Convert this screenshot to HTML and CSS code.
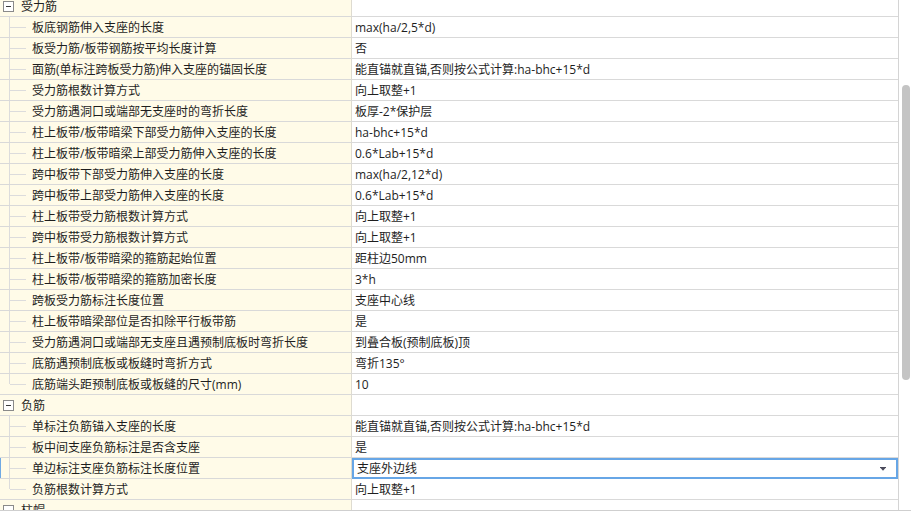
FILE: index.html
```html
<!DOCTYPE html>
<html>
<head>
<meta charset="utf-8">
<link rel="stylesheet" href="styles.css">
</head>
<body>
<div class="panel">
  <div class="grid">
    <div class="rows">
      <div class="row group"><div class="name"><span class="toggle"></span><span class="label">受力筋</span></div><div class="value"></div></div>
      <div class="row"><div class="name"><span class="branch"></span><span class="label">板底钢筋伸入支座的长度</span></div><div class="value"><span class="label">max(ha/2,5*d)</span></div></div>
      <div class="row"><div class="name"><span class="branch"></span><span class="label">板受力筋/板带钢筋按平均长度计算</span></div><div class="value"><span class="label">否</span></div></div>
      <div class="row"><div class="name"><span class="branch"></span><span class="label">面筋(单标注跨板受力筋)伸入支座的锚固长度</span></div><div class="value"><span class="label">能直锚就直锚,否则按公式计算:ha-bhc+15*d</span></div></div>
      <div class="row"><div class="name"><span class="branch"></span><span class="label">受力筋根数计算方式</span></div><div class="value"><span class="label">向上取整+1</span></div></div>
      <div class="row"><div class="name"><span class="branch"></span><span class="label">受力筋遇洞口或端部无支座时的弯折长度</span></div><div class="value"><span class="label">板厚-2*保护层</span></div></div>
      <div class="row"><div class="name"><span class="branch"></span><span class="label">柱上板带/板带暗梁下部受力筋伸入支座的长度</span></div><div class="value"><span class="label">ha-bhc+15*d</span></div></div>
      <div class="row"><div class="name"><span class="branch"></span><span class="label">柱上板带/板带暗梁上部受力筋伸入支座的长度</span></div><div class="value"><span class="label">0.6*Lab+15*d</span></div></div>
      <div class="row"><div class="name"><span class="branch"></span><span class="label">跨中板带下部受力筋伸入支座的长度</span></div><div class="value"><span class="label">max(ha/2,12*d)</span></div></div>
      <div class="row"><div class="name"><span class="branch"></span><span class="label">跨中板带上部受力筋伸入支座的长度</span></div><div class="value"><span class="label">0.6*Lab+15*d</span></div></div>
      <div class="row"><div class="name"><span class="branch"></span><span class="label">柱上板带受力筋根数计算方式</span></div><div class="value"><span class="label">向上取整+1</span></div></div>
      <div class="row"><div class="name"><span class="branch"></span><span class="label">跨中板带受力筋根数计算方式</span></div><div class="value"><span class="label">向上取整+1</span></div></div>
      <div class="row"><div class="name"><span class="branch"></span><span class="label">柱上板带/板带暗梁的箍筋起始位置</span></div><div class="value"><span class="label">距柱边50mm</span></div></div>
      <div class="row"><div class="name"><span class="branch"></span><span class="label">柱上板带/板带暗梁的箍筋加密长度</span></div><div class="value"><span class="label">3*h</span></div></div>
      <div class="row"><div class="name"><span class="branch"></span><span class="label">跨板受力筋标注长度位置</span></div><div class="value"><span class="label">支座中心线</span></div></div>
      <div class="row"><div class="name"><span class="branch"></span><span class="label">柱上板带暗梁部位是否扣除平行板带筋</span></div><div class="value"><span class="label">是</span></div></div>
      <div class="row"><div class="name"><span class="branch"></span><span class="label">受力筋遇洞口或端部无支座且遇预制底板时弯折长度</span></div><div class="value"><span class="label">到叠合板(预制底板)顶</span></div></div>
      <div class="row"><div class="name"><span class="branch"></span><span class="label">底筋遇预制底板或板缝时弯折方式</span></div><div class="value"><span class="label">弯折135°</span></div></div>
      <div class="row"><div class="name"><span class="branch last"></span><span class="label">底筋端头距预制底板或板缝的尺寸(mm)</span></div><div class="value"><span class="label">10</span></div></div>
      <div class="row group"><div class="name"><span class="toggle"></span><span class="label">负筋</span></div><div class="value"></div></div>
      <div class="row"><div class="name"><span class="branch"></span><span class="label">单标注负筋锚入支座的长度</span></div><div class="value"><span class="label">能直锚就直锚,否则按公式计算:ha-bhc+15*d</span></div></div>
      <div class="row"><div class="name"><span class="branch"></span><span class="label">板中间支座负筋标注是否含支座</span></div><div class="value"><span class="label">是</span></div></div>
      <div class="row selected"><div class="name"><span class="branch"></span><span class="label">单边标注支座负筋标注长度位置</span></div><div class="value editor"><span class="edit-text">支座外边线</span><svg class="arrow" width="6" height="4" viewBox="0 0 6 4"><rect x="0" y="0" width="6" height="1" fill="#4b4b5c"/><path d="M0.5 1 L5.5 1 L3 3.8 Z" fill="#4b4b5c"/></svg></div></div>
      <div class="row"><div class="name"><span class="branch last"></span><span class="label">负筋根数计算方式</span></div><div class="value"><span class="label">向上取整+1</span></div></div>
      <div class="row group"><div class="name"><span class="toggle"></span><span class="label">柱帽</span></div><div class="value"></div></div>
    </div>
  </div>
  <div class="scrollbar"><div class="thumb"></div></div>
</div>
</body>
</html>
```

FILE: styles.css
```css
html, body {
  margin: 0;
  padding: 0;
  background: #ffffff;
}

body {
  font-family: "Open Sans", "Noto Sans CJK SC", sans-serif;
  font-size: 12px;
  color: #1e1e1e;
}

.panel {
  display: flex;
  height: 510px;
  border-bottom: 1px solid #cfcfcf;
  overflow: hidden;
}

.grid {
  width: 899px;
  box-sizing: border-box;
  border-right: 1px solid #d4d4d4;
  overflow: hidden;
}

.rows {
  margin-top: -4px;
}

.row {
  display: flex;
  height: 21px;
}

.name {
  width: 352px;
  flex: none;
  box-sizing: border-box;
  height: 21px;
  display: flex;
  align-items: center;
  background: #fffbe8;
  border-right: 1px solid #dedbd0;
  border-bottom: 1px solid #d9d9d9;
  white-space: nowrap;
  overflow: hidden;
}

.value {
  flex: 1;
  box-sizing: border-box;
  height: 21px;
  display: flex;
  align-items: center;
  padding-left: 3px;
  border-bottom: 1px solid #d9d9d9;
  white-space: nowrap;
  overflow: hidden;
}

.label {
  line-height: 18px;
  padding-top: 2px;
}

.group .label {
  margin-left: 7px;
}

.toggle {
  flex: none;
  width: 11px;
  height: 11px;
  margin-left: 3px;
  margin-top: 1px;
  box-sizing: border-box;
  border: 1px solid #8a8a8a;
  background: #ffffff;
  position: relative;
}

.toggle::after {
  content: "";
  position: absolute;
  left: 2px;
  top: 4px;
  width: 5px;
  height: 1px;
  background: #3a3a3a;
}

.branch {
  flex: none;
  align-self: stretch;
  width: 32px;
  position: relative;
}

.branch::before {
  content: "";
  position: absolute;
  left: 9px;
  top: 0;
  bottom: -1px;
  width: 1px;
  background: #dcdcdc;
}

.branch.last::before {
  bottom: auto;
  height: 10px;
}

.branch::after {
  content: "";
  position: absolute;
  left: 10px;
  top: 10px;
  width: 16px;
  height: 1px;
  background: #dcdcdc;
}

.selected .name {
  box-shadow: inset 1px 0 0 #6fa9e4;
}

.value.editor {
  border: 2px solid #67a6e6;
  padding-left: 3px;
  padding-right: 10px;
  justify-content: space-between;
}

.edit-text {
  line-height: 17px;
}

.arrow {
  display: block;
  margin-top: 1px;
}

.scrollbar {
  width: 12px;
  flex: none;
  background: #ffffff;
}

.thumb {
  margin-top: 85px;
  margin-left: 3px;
  width: 8px;
  height: 295px;
  border-radius: 4px;
  background: #c4c4c4;
}
```
